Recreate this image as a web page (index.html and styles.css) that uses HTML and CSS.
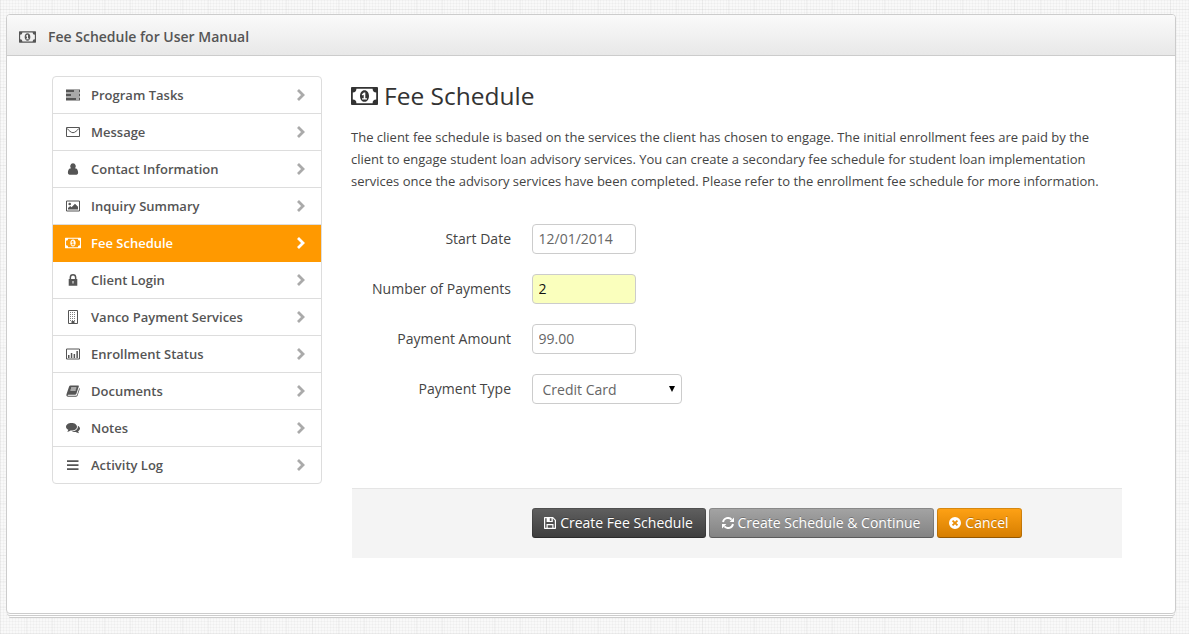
FILE: index.html
```html
<!DOCTYPE html>
<html lang="en">
<head>
<meta charset="utf-8">
<title>Fee Schedule for User Manual</title>
<link rel="stylesheet" href="styles.css">
</head>
<body>
<svg class="sprite" aria-hidden="true">
  <symbol id="money" viewBox="0 0 30 20"><path fill-rule="evenodd" d="M1 0h28a1 1 0 0 1 1 1v18a1 1 0 0 1-1 1H1a1 1 0 0 1-1-1V1a1 1 0 0 1 1-1zM6 2a4 4 0 0 1-4 4v8a4 4 0 0 1 4 4h18a4 4 0 0 1 4-4V6a4 4 0 0 1-4-4z"/><path fill-rule="evenodd" d="M15 3.500c3 0 5 2.900 5 6.500s-2 6.500-5 6.500-5-2.900-5-6.500 2-6.500 5-6.500zM14.300 6l-2.400 2.200 1 1.200 1.200-.9v4H12.300V14h5.400v-1.500h-1.800V6z"/></symbol>
  <symbol id="tasks" viewBox="0 0 14 12"><path fill-rule="evenodd" d="M0 .5h14v3H0zM8 1.500v1h5v-1zM0 4.500h14v3H0zM5 5.500v1h8v-1zM0 8.500h14v3H0zM10 9.500v1h3v-1z"/></symbol>
  <symbol id="mail" viewBox="0 0 14 12"><path fill="none" stroke="currentColor" d="M.5 1.500h13v9H.5zM.7 2.200C3 4.500 5 6.700 7 6.700s4-2.200 6.300-4.500"/></symbol>
  <symbol id="user" viewBox="0 0 14 12"><path d="M7 .3a2.900 2.900 0 0 1 1.900 5c2.200 0 3.200 2 3.200 4.300 0 1.300-.6 2.100-1.700 2.100H3.600c-1.100 0-1.700-.8-1.700-2.100 0-2.300 1-4.300 3.200-4.300A2.900 2.900 0 0 1 7 .3z"/></symbol>
  <symbol id="image" viewBox="0 0 14 12"><path fill="none" stroke="currentColor" d="M.5 1h13v10H.5z"/><circle cx="3.700" cy="4" r="1.300"/><path d="M2 9.500V8l2.200-2 1.300 1.200L9 3.800l3 3v2.700z"/></symbol>
  <symbol id="lock" viewBox="0 0 14 12"><path fill-rule="evenodd" d="M2.700 5h.9V3.500a3.400 3.400 0 0 1 6.800 0V5h.9v6.700H2.700zM5.100 5h3.800V3.500a1.900 1.900 0 0 0-3.800 0zM6.500 7v2.500h1V7z"/></symbol>
  <symbol id="building" viewBox="0 0 14 14"><path fill="none" stroke="currentColor" d="M2.500.5h9v13h-9z"/><path fill="none" stroke="currentColor" stroke-dasharray="1 1" stroke-opacity=".75" d="M4 2.500h6M4 4.500h6M4 6.500h6M4 8.500h6M4 10.500h6"/><path d="M5.500 11h3v3h-3z"/></symbol>
  <symbol id="chart" viewBox="0 0 14 12"><path fill="none" stroke="currentColor" d="M.5 1h13v10H.5z"/><path d="M2 7h1.500v3H2zM4.800 5h1.500v5H4.800zM7.600 6h1.500v4H7.600zM10.400 3h1.500v7h-1.500z"/></symbol>
  <symbol id="book" viewBox="0 0 14 12"><path fill-rule="evenodd" d="M4.500.5H12c.7 0 1 .4.800 1L10.300 9c-.2.600-.7.800-1.300.8H2.200c-.8 0-.8 1 .2 1H10c.5 0 .8-.2 1-.7L13.300 3c.5.300.6.700.4 1.300l-2.100 6.300c-.2.700-.8 1.100-1.500 1.100H2.200C.8 11.700 0 10.500.500 9.300L3.100 1.600C3.300.9 3.800.5 4.500.5zM5.200 2.500l-.3 1h5.300l.3-1zM4.600 4.500l-.3 1h5.300l.3-1z"/></symbol>
  <symbol id="comments" viewBox="0 0 14 12"><path d="M5.500 1C8.600 1 11 2.600 11 4.800S8.600 8.600 5.500 8.600l-1-.1C3.500 9.300 2.400 9.700 1.200 9.700c.6-.5 1-1.100 1.100-1.900C.9 7.100 0 6 0 4.800 0 2.600 2.400 1 5.500 1z"/><path d="M11.800 3.800c1.300.6 2.200 1.600 2.200 2.800s-.8 2.100-1.900 2.700c.1.800.5 1.400 1.100 1.900-1.200 0-2.400-.5-3.300-1.200-1.500.2-3 0-4.100-.6 3.500 0 6.800-2.200 6-5.600z"/></symbol>
  <symbol id="bars" viewBox="0 0 14 12"><path d="M1 1.200h11.500V3H1zM1 5.200h11.500V7H1zM1 9.200h11.500V11H1z"/></symbol>
  <symbol id="chevron" viewBox="0 0 10 12"><path fill="none" stroke="currentColor" stroke-width="2.800" d="M2 1l5 5-5 5"/></symbol>
  <symbol id="save" viewBox="0 0 12 12"><path fill-rule="evenodd" d="M0 .7C0 .3.300 0 .7 0H9l3 3v8.300c0 .4-.3.700-.7.700H.7a.7.700 0 0 1-.7-.7zM1.200 1.200v9.600h1.300V7h7v3.800h1.300V3.500L8.800 1.300V5H2.600V1.200zM5.800 1.200v2.700h1.700V1.200zM3.700 8.200v2.600h4.600V8.200z"/></symbol>
  <symbol id="refresh" viewBox="0 0 12 12"><path fill="none" stroke="currentColor" stroke-width="1.900" d="M1 5A5 5 0 0 1 9.600 2.600M11 7a5 5 0 0 1-8.600 2.400"/><path d="M12 .6V5H7.600zM0 11.400V7h4.400z"/></symbol>
  <symbol id="remove" viewBox="0 0 12 12"><path fill-rule="evenodd" d="M6 0a6 6 0 1 1 0 12A6 6 0 0 1 6 0zM4.200 2.900L2.900 4.200 4.700 6 2.900 7.800l1.300 1.300L6 7.300l1.800 1.800 1.300-1.300L7.300 6l1.800-1.800-1.300-1.300L6 4.700z"/></symbol>
</svg>
<section class="panel">
  <header class="panel-head"><svg class="head-icon"><use href="#money"/></svg><h1>Fee Schedule for User Manual</h1></header>
  <div class="panel-body">
    <nav class="menu">
      <a class="item"><svg class="icon"><use href="#tasks"/></svg><span>Program Tasks</span><svg class="chevron"><use href="#chevron"/></svg></a>
      <a class="item"><svg class="icon"><use href="#mail"/></svg><span>Message</span><svg class="chevron"><use href="#chevron"/></svg></a>
      <a class="item"><svg class="icon"><use href="#user"/></svg><span>Contact Information</span><svg class="chevron"><use href="#chevron"/></svg></a>
      <a class="item"><svg class="icon"><use href="#image"/></svg><span>Inquiry Summary</span><svg class="chevron"><use href="#chevron"/></svg></a>
      <a class="item active"><svg class="icon wide"><use href="#money"/></svg><span>Fee Schedule</span><svg class="chevron"><use href="#chevron"/></svg></a>
      <a class="item"><svg class="icon"><use href="#lock"/></svg><span>Client Login</span><svg class="chevron"><use href="#chevron"/></svg></a>
      <a class="item"><svg class="icon tall"><use href="#building"/></svg><span>Vanco Payment Services</span><svg class="chevron"><use href="#chevron"/></svg></a>
      <a class="item"><svg class="icon"><use href="#chart"/></svg><span>Enrollment Status</span><svg class="chevron"><use href="#chevron"/></svg></a>
      <a class="item"><svg class="icon"><use href="#book"/></svg><span>Documents</span><svg class="chevron"><use href="#chevron"/></svg></a>
      <a class="item"><svg class="icon"><use href="#comments"/></svg><span>Notes</span><svg class="chevron"><use href="#chevron"/></svg></a>
      <a class="item"><svg class="icon"><use href="#bars"/></svg><span>Activity Log</span><svg class="chevron"><use href="#chevron"/></svg></a>
    </nav>
    <main class="content">
      <h2><svg class="title-icon"><use href="#money"/></svg><span>Fee Schedule</span></h2>
      <p class="intro">The client fee schedule is based on the services the client has chosen to engage. The initial enrollment fees are paid by the<br>client to engage student loan advisory services. You can create a secondary fee schedule for student loan implementation<br>services once the advisory services have been completed. Please refer to the enrollment fee schedule for more information.</p>
      <form class="form">
        <div class="row"><label for="date">Start Date</label><input id="date" class="field" value="12/01/2014"></div>
        <div class="row"><label for="count">Number of Payments</label><input id="count" class="field filled" value="2"></div>
        <div class="row"><label for="amount">Payment Amount</label><input id="amount" class="field" value="99.00"></div>
        <div class="row"><label for="type">Payment Type</label><div class="select" id="type"><span>Credit Card</span><i class="arrow"></i></div></div>
        <div class="actions">
          <button type="button" class="btn dark"><svg><use href="#save"/></svg><span>Create Fee Schedule</span></button>
          <button type="button" class="btn gray"><svg><use href="#refresh"/></svg><span>Create Schedule &amp; Continue</span></button>
          <button type="button" class="btn orange"><svg><use href="#remove"/></svg><span>Cancel</span></button>
        </div>
      </form>
    </main>
  </div>
</section>
</body>
</html>
```
FILE: styles.css
```css
* { box-sizing: border-box; }
body {
  margin: 0;
  padding: 14px 13px 0 6px;
  height: 634px;
  overflow: hidden;
  font-family: "Open Sans", sans-serif;
  font-size: 14px;
  color: #444;
  background-color: #f9f9f9;
  background-image:
    repeating-linear-gradient(90deg, rgba(0,0,0,.03) 0 1px, transparent 1px 26px),
    repeating-linear-gradient(0deg, rgba(0,0,0,.03) 0 1px, transparent 1px 26px),
    repeating-linear-gradient(90deg, rgba(0,0,0,.022) 0 1px, transparent 1px 3px),
    repeating-linear-gradient(0deg, rgba(0,0,0,.022) 0 1px, transparent 1px 3px);
}
svg { fill: currentColor; display: block; flex: none; }
.sprite { display: none; }
h1, h2, p { margin: 0; }
.panel {
  height: 600px;
  border: 1px solid #ccc;
  border-radius: 4px;
  background: #fff;
  box-shadow: 0 2px 0 -1px #fff, 0 3px 0 -1px #ccc, 0 6px 0 -3px #fff, 0 7px 0 -3px #ccc;
}
.panel-head {
  height: 41px;
  display: flex;
  align-items: center;
  padding: 3px 12px 0 12px;
  gap: 12px;
  border-bottom: 1px solid #ccc;
  border-radius: 3px 3px 0 0;
  background: linear-gradient(#fafafa, #e8e8e8);
  color: #555;
}
.head-icon { width: 17px; height: 12px; }
h1 { font-size: 14px; line-height: 20px; font-weight: 600; }
.panel-body { display: flex; gap: 29px; padding: 20px 53px 0 45px; }
.menu { width: 270px; height: 408px; flex: none; border: 1px solid #ddd; border-radius: 4px; overflow: hidden; }
.item {
  height: 37px;
  display: flex;
  align-items: center;
  padding: 0 15px 0 13px;
  border-bottom: 1px solid #ddd;
  font-size: 13px;
  font-weight: 600;
  color: #555;
}
.item:last-child { height: 36px; border-bottom: 0; }
.item span { flex: 1; margin-left: 11px; }
.icon { width: 14px; height: 12px; }
.icon.tall { height: 14px; }
.icon.wide { width: 16px; margin: 0 -1px; }
.chevron { width: 10px; height: 12px; color: #aaa; }
.active { background: #f90; color: #fff; border-color: #f90; }
.active .chevron { color: #fff; }
.content { width: 771px; }
h2 { display: flex; align-items: center; gap: 6px; height: 38px; font-size: 24.500px; font-weight: 400; color: #333; }
.title-icon { width: 27px; height: 18px; margin-top: 2px; }
.intro { margin-top: 12px; font-size: 13px; line-height: 22px; white-space: nowrap; color: #444; }
.form { padding-top: 32px; }
.row { display: flex; height: 30px; gap: 21px; margin-bottom: 20px; }
label { width: 160px; text-align: right; line-height: 30px; }
.field, .select {
  height: 30px;
  border: 1px solid #ccc;
  border-radius: 4px;
  background: #fff;
  font: 14px "Open Sans", sans-serif;
  color: #666;
}
.field { width: 104px; padding: 0 6px 2px 5.500px; }
.filled { background: #faffbd; color: #111; }
.select { width: 150px; display: flex; align-items: center; justify-content: space-between; padding: 1px 6px 0 9.500px; }
.arrow { border: solid transparent; border-width: 6px 3.500px 0; border-top-color: #000; margin-top: -2px; }
.actions { margin: 84px 0 0 1px; height: 70px; display: flex; gap: 3px; padding: 19px 0 0 180px; background: #f4f4f4; border-top: 1px solid #e5e5e5; }
.btn {
  height: 30px;
  display: flex;
  align-items: center;
  justify-content: center;
  gap: 4px;
  padding: 0 1px 0 0;
  border: 1px solid rgba(0,0,0,.16);
  border-bottom-color: rgba(0,0,0,.3);
  border-radius: 3px;
  color: #fff;
  font: 14px "Open Sans", sans-serif;
  white-space: nowrap;
  text-shadow: 0 -1px 0 rgba(0,0,0,.25);
  background-clip: border-box;
  background-origin: border-box;
}
.btn span { padding-bottom: 2px; }
.btn svg { width: 12px; height: 12px; }
.dark { width: 174px; background-image: linear-gradient(#606060, #3d3d3d); }
.gray { width: 225px; background-image: linear-gradient(#a4a4a4, #828282); }
.orange { width: 85px; background-image: linear-gradient(#ffa215, #d57d00); }
```
